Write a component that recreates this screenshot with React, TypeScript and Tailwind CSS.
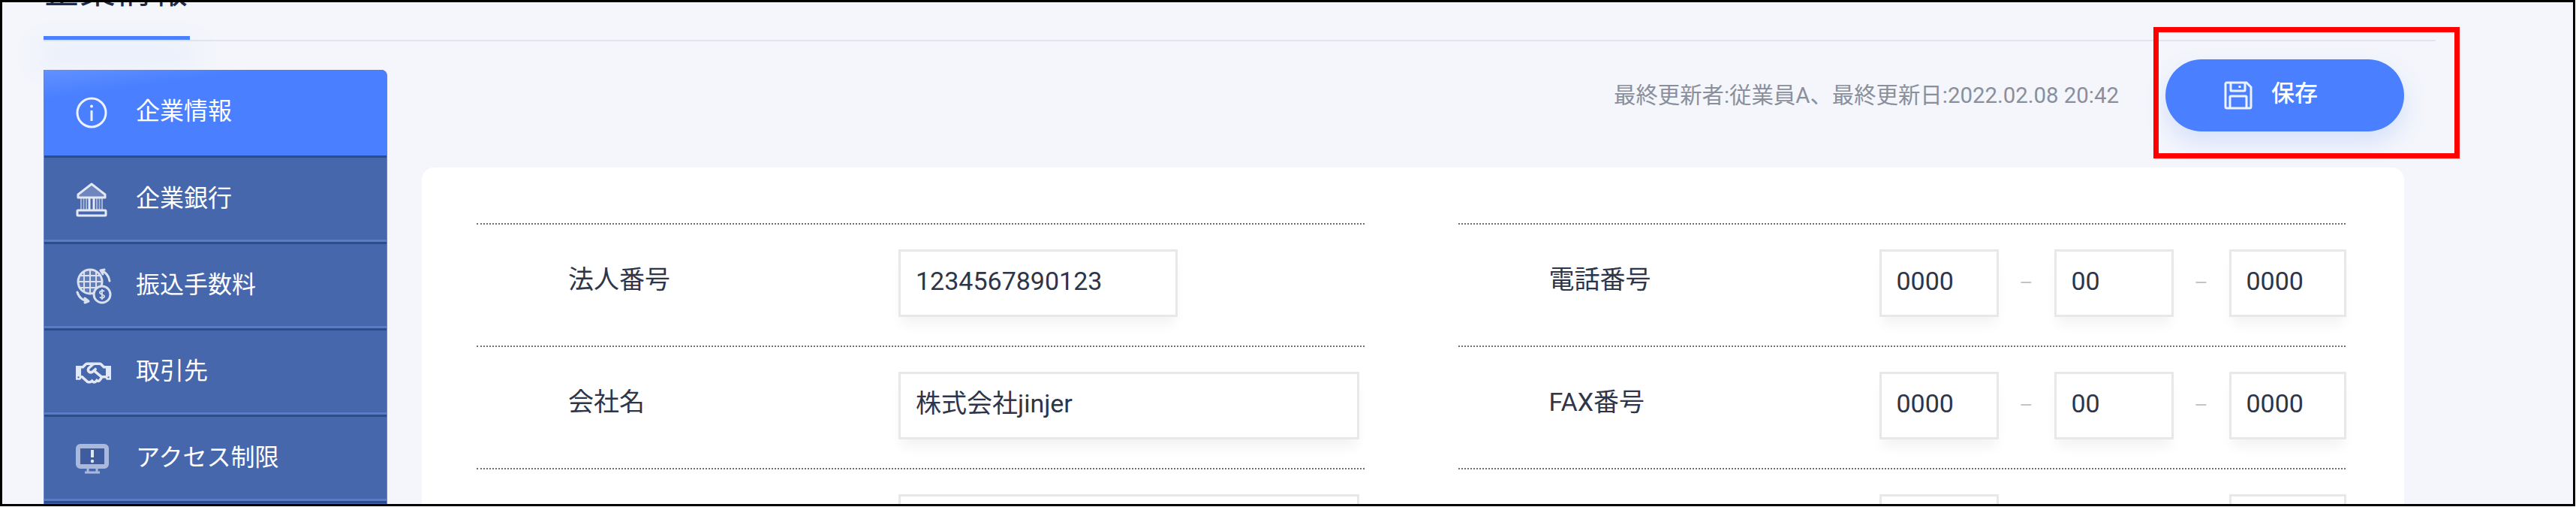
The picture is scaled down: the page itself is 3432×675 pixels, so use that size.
import type { ReactNode } from "react";
import { FaRegHandshake } from "react-icons/fa";

const InfoIcon = () => (
  <svg width="42" height="42" viewBox="0 0 42 42" fill="none" stroke="#fff" className="opacity-90">
    <circle cx="21" cy="21" r="19" strokeWidth="3" />
    <circle cx="21" cy="12.5" r="2" fill="#fff" stroke="none" />
    <path d="M21 18v14" strokeWidth="3" />
  </svg>
);

const BankIcon = () => (
  <svg width="42" height="46" viewBox="0 0 42 46" fill="none" stroke="#fff" className="opacity-85">
    <path d="M21 2 3 16v4h36v-4z" strokeWidth="3" strokeLinejoin="round" fill="#fff" fillOpacity=".25" />
    <path d="M7 21v15M10.500 21v15M14 21v15M28 21v15M31.500 21v15M35 21v15" strokeWidth="2" opacity=".6" />
    <path d="M18 21v15M24 21v15" strokeWidth="3" />
    <rect x="2" y="37" width="38" height="7" rx="1" strokeWidth="3" />
  </svg>
);

const GlobeIcon = () => (
  <svg width="48" height="48" viewBox="0 0 48 48" fill="none" stroke="#fff" className="opacity-80">
    <circle cx="19" cy="18" r="16" strokeWidth="3" fill="#fff" fillOpacity=".2" />
    <path d="M3 18h32M5 10h28M5 26h28M19 2v32M11 4v28M27 4v28" strokeWidth="2" />
    <path d="M33 3c6 2 11 7 12 14M33 3l5-1M33 3l3 5" strokeWidth="3" strokeLinecap="round" />
    <path d="M2 32c2 7 8 12 15 12M17 44l-5-4M17 44l-5 2" strokeWidth="3" strokeLinecap="round" />
    <circle cx="35" cy="35" r="11" fill="#4767ad" strokeWidth="3" />
    <path d="M38 31c-1-1.500-6-1.500-6 1.500s6 2 6 5-5 2.500-6 1M35 28v14" strokeWidth="1.8" />
  </svg>
);

const MonitorIcon = () => (
  <svg width="44" height="40" viewBox="0 0 44 40" fill="none" stroke="#a9b9dc">
    <rect x="3" y="3" width="38" height="27" rx="3" strokeWidth="6" fill="#3f5c9f" />
    <path d="M16 33v4M28 33v4M12 38h20" strokeWidth="3" />
    <path d="M22 8v10" stroke="#dfe6f4" strokeWidth="4" />
    <circle cx="22" cy="23" r="2.200" fill="#dfe6f4" stroke="none" />
  </svg>
);

const SaveIcon = () => (
  <svg width="38" height="38" viewBox="0 0 38 38" fill="none" stroke="#fff" strokeWidth="3" className="opacity-90">
    <path d="M2 4a2 2 0 0 1 2-2h26l6 6v26a2 2 0 0 1-2 2H4a2 2 0 0 1-2-2z" />
    <path d="M9 2v10a1 1 0 0 0 1 1h17a1 1 0 0 0 1-1V2M21 6v3" />
    <path d="M8 36V21a1 1 0 0 1 1-1h20a1 1 0 0 1 1 1v15" />
  </svg>
);

const menuItems = [
  { label: "企業情報", icon: <InfoIcon />, active: true },
  { label: "企業銀行", icon: <BankIcon /> },
  { label: "振込手数料", icon: <GlobeIcon /> },
  { label: "取引先", icon: <FaRegHandshake className="text-[47px] text-white opacity-85" /> },
  { label: "アクセス制限", icon: <MonitorIcon /> },
];

const TextBox = ({ value, className }: { value?: string; className: string }) => (
  <div
    className={`flex h-[90px] shrink-0 items-center border-[3px] border-[#e8e8e8] bg-white pb-[5px] pl-[20px] text-[34px] text-[#2e3549] shadow-[0_14px_16px_-4px_rgba(0,0,0,0.05)] ${className}`}
  >
    {value}
  </div>
);

const Dash = () => (
  <span className="flex w-[74px] shrink-0 justify-center text-[28px] text-[#c4c4c4]">–</span>
);

const Row = ({ label, className, children }: { label: string; className: string; children: ReactNode }) => (
  <div className={`flex h-[163px] items-start border-t-2 border-dotted border-[#6f6f6f] pt-[33px] ${className}`}>
    <div className="flex h-[80px] w-[440px] shrink-0 items-center text-[34px] text-[#2e3549]">{label}</div>
    {children}
  </div>
);

const PhoneBoxes = ({ first, middle, last }: { first: string; middle: string; last: string }) => (
  <div className="flex items-center">
    <TextBox value={first} className="w-[159px]" />
    <Dash />
    <TextBox value={middle} className="w-[159px]" />
    <Dash />
    <TextBox value={last} className="w-[156px]" />
  </div>
);

export default function App() {
  return (
    <div className="h-[675px] w-full bg-white font-[Roboto,'Noto_Sans_CJK_JP',sans-serif]">
      <div className="relative flex h-[674px] w-[3431px] flex-col overflow-hidden border-[3px] border-black bg-[#f4f6fb]">
        {/* page tab, its title is cut off by the top of the crop */}
        <div className="ml-[55px] h-[52px] w-[3187px] shrink-0 border-b-2 border-[#e1e5ef]">
          <div className="h-[45px] w-[195px] overflow-hidden">
            <p className="-mt-[39px] text-[48px] leading-[48px] text-[#20284a]">企業情報</p>
          </div>
          <div className="h-[5px] w-[195px] bg-[#4a80ff] shadow-[0_22px_40px_8px_rgba(74,128,255,0.1)]" />
        </div>

        <div className="flex min-h-0 flex-1">
          <nav className="ml-[55px] mt-[38px] flex w-[458px] shrink-0 flex-col overflow-hidden rounded-tr-lg border-x border-[#6685c6] bg-[#4767ad]">
            {menuItems.map((item, i) => (
              <div
                key={item.label}
                className={`flex shrink-0 items-center border-b-[3px] border-[#2f4c8a] pl-[42px] text-[32px] text-white ${
                  item.active
                    ? "bg-[linear-gradient(172deg,#6291ff_0%,#4a80ff_22%)]"
                    : "shadow-[inset_0_-3px_0_#5a7cc4]"
                } ${i === 0 ? "h-[117px]" : "h-[115px]"}`}
              >
                <span className="flex w-[80px] shrink-0 items-center">{item.icon}</span>
                <span className="pb-[4px]">{item.label}</span>
              </div>
            ))}
          </nav>

          <main className="ml-[46px] w-[2641px] shrink-0 pt-[24px]">
            <div className="mb-[48px] flex items-center justify-end gap-[62px]">
              <span className="text-[29.4px] text-[#8a8f9c]">最終更新者:従業員A、最終更新日:2022.02.08 20:42</span>
              <button className="flex h-[96px] w-[318px] items-center gap-[25px] rounded-full bg-[#4a80ff] pl-[78px] text-[31px] font-medium text-white shadow-[0_14px_30px_rgba(74,128,255,0.18)]">
                <SaveIcon />
                <span className="pb-[4px]">保存</span>
              </button>
            </div>

            <div className="rounded-2xl bg-white pb-[40px] pl-[73px] pr-[78px] pt-[74px]">
              <div className="grid grid-cols-2 gap-x-[125px]">
                <Row label="法人番号" className="pl-[122px]">
                  <TextBox value="1234567890123" className="w-[372px]" />
                </Row>
                <Row label="電話番号" className="pl-[121px]">
                  <PhoneBoxes first="0000" middle="00" last="0000" />
                </Row>
                <Row label="会社名" className="pl-[122px]">
                  <TextBox value="株式会社jinjer" className="w-[614px]" />
                </Row>
                <Row label="FAX番号" className="pl-[121px]">
                  <PhoneBoxes first="0000" middle="00" last="0000" />
                </Row>
                <Row label="" className="pl-[122px]">
                  <TextBox className="w-[614px]" />
                </Row>
                <Row label="" className="pl-[121px]">
                  <div className="flex">
                    <TextBox className="w-[159px]" />
                    <div className="w-[307px] shrink-0" />
                    <TextBox className="w-[156px]" />
                  </div>
                </Row>
              </div>
            </div>
          </main>
        </div>

        {/* red annotation drawn over the save button */}
        <div className="absolute left-[2866px] top-[33px] h-[175px] w-[408px] border-[7px] border-[#ff0000]" />
      </div>
    </div>
  );
}
